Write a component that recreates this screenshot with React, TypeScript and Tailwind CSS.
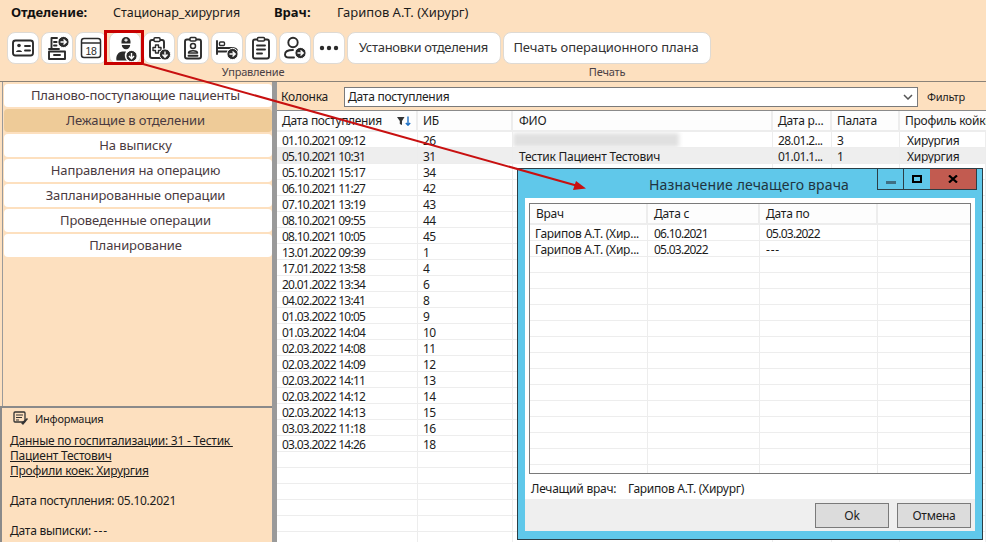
const dates = ["01.10.2021 09:12","05.10.2021 10:31","05.10.2021 15:17","06.10.2021 11:27","07.10.2021 13:19","08.10.2021 09:55","08.10.2021 10:05","13.01.2022 09:39","17.01.2022 13:58","20.01.2022 13:34","04.02.2022 13:41","01.03.2022 10:05","01.03.2022 14:04","02.03.2022 14:08","02.03.2022 14:09","02.03.2022 14:11","02.03.2022 14:12","02.03.2022 14:13","03.03.2022 11:18","03.03.2022 14:26"];
const ibs = ["26","31","34","42","43","44","45","1","4","6","8","9","10","11","12","13","14","15","16","18"];
const nav = ["Планово-поступающие пациенты","Лежащие в отделении","На выписку","Направления на операцию","Запланированные операции","Проведенные операции","Планирование"];

const S = { fill: "none", stroke: "#2b2b2b", strokeWidth: 1.9, strokeLinecap: "round" as const, strokeLinejoin: "round" as const };
function Badge({ dir, x = 17.5, y = 17.5 }: { dir: "r" | "d"; x?: number; y?: number }) {
  return (
    <g>
      <circle cx={x} cy={y} r={5.6} fill="#2b2b2b" stroke="#fff" strokeWidth={1} />
      {dir === "r" ? (
        <path d={`M${x - 3} ${y}h5.5M${x} ${y - 2.5}l2.7 2.5l-2.7 2.5`} fill="none" stroke="#fff" strokeWidth={1.4} />
      ) : (
        <path d={`M${x} ${y - 3}v5.5M${x - 2.5} ${y}l2.5 2.7l2.5 -2.7`} fill="none" stroke="#fff" strokeWidth={1.4} />
      )}
    </g>
  );
}
const icons = [
  <g key="0"><rect x="2" y="4.500" width="20" height="15" rx="2.500" {...S} /><circle cx="8" cy="9.500" r="1.800" fill="#2b2b2b" /><path d="M5 16c0-2.500 6-2.500 6 0z" fill="#2b2b2b" /><path d="M14 10h5M14 14.500h5" {...S} /></g>,
  <g key="1"><path d="M12 2H6.500v10" {...S} /><path d="M9 6h3M9 9.500h2.500" {...S} /><path d="M4 15.500h16v7.500h-16z" {...S} /><path d="M4 13h10M9 19h6" {...S} /><Badge dir="r" x={18.500} y={6} /></g>,
  <g key="2"><rect x="2.500" y="2.500" width="19" height="19" rx="2.500" fill="none" stroke="#2b2b2b" strokeWidth={1.500} /><path d="M2.500 7h19" fill="none" stroke="#2b2b2b" strokeWidth={1.500} /><text x="12" y="18.500" textAnchor="middle" fontSize="10.500" fill="#2b2b2b" fontFamily="Liberation Sans, sans-serif">18</text></g>,
  <g key="3"><path d="M8.500 7.500V5.500a4.500 4.500 0 0 1 9 0v2z" fill="#2b2b2b" /><path d="M13 2.400v3.400M11.300 4.100h3.400" stroke="#fff" strokeWidth={1.100} /><path d="M8.800 9h8.400a4.200 4.200 0 0 1-8.400 0z" fill="#2b2b2b" /><path d="M3.500 24.500c-1-5 2-9 6-9h3.500a7 7 0 0 0 1 9z" fill="#2b2b2b" /><Badge dir="d" x={18.500} y={20} /></g>,
  <g key="4"><rect x="3" y="4" width="14" height="18" rx="2" {...S} /><rect x="7" y="1.800" width="6" height="3.600" rx="1" fill="#fff" stroke="#2b2b2b" strokeWidth={1.500} /><path d="M8.500 9h3v2.500H14v3h-2.500v2.500h-3v-2.500H6v-3h2.500z" {...S} strokeWidth={1.400} /><Badge dir="d" x={18} y={18.500} /></g>,
  <g key="5"><rect x="4" y="3.500" width="16" height="19" rx="2" {...S} /><rect x="9" y="1.500" width="6" height="3.500" rx="1" fill="#fff" stroke="#2b2b2b" strokeWidth={1.500} /><circle cx="12" cy="10" r="2.500" {...S} strokeWidth={1.500} /><path d="M7.500 17c0-3 9-3 9 0z" {...S} strokeWidth={1.500} /><path d="M7.500 19.800h9" {...S} /></g>,
  <g key="6"><path d="M2 5v13" {...S} /><rect x="4.500" y="6" width="5" height="3.500" rx="1" {...S} strokeWidth={1.400} /><path d="M2 12h14c4 0 6 .5 6 3v2M2 15.500h10" {...S} /><Badge dir="r" x={17.500} y={18} /></g>,
  <g key="7"><rect x="4" y="3.500" width="16" height="19" rx="2" {...S} /><rect x="8.500" y="1.500" width="7" height="3.500" rx="1" fill="#fff" stroke="#2b2b2b" strokeWidth={1.500} /><path d="M8 9.500h8M8 13.500h8M8 17.500h5" {...S} /></g>,
  <g key="8"><circle cx="10" cy="6.500" r="4.700" {...S} /><path d="M10 14c-5 0-8 1.500-8 4.500c0 2 1.500 3 4 3h5" {...S} /><Badge dir="r" x={17.500} y={17} /></g>,
  <g key="9"><circle cx="5" cy="12" r="2.200" fill="#2b2b2b" /><circle cx="12" cy="12" r="2.200" fill="#2b2b2b" /><circle cx="19" cy="12" r="2.200" fill="#2b2b2b" /></g>,
];

function Row({ i }: { i: number }) {
  const cell = "h-4 border-r border-b border-[#ededed] px-[5px] leading-[17px] whitespace-nowrap overflow-hidden shrink-0";
  const num = "tracking-[-0.75px]";
  const bg = i === 1 ? "bg-[#eeeeee]" : "";
  const extra: Record<number, string[]> = { 0: ["", "28.01.2...", "3", "Хирургия"], 1: ["Тестик Пациент Тестович", "01.01.1...", "1", "Хирургия"] };
  const e = extra[i] ?? ["", "", "", ""];
  return (
    <div className={`flex ${bg}`}>
      <div className={`${cell} ${num} w-[141px]`}>{dates[i] ?? ""}</div>
      <div className={`${cell} w-[95px] tracking-[-0.5px]`}>{ibs[i] ?? ""}</div>
      <div className={`${cell} w-[260px] relative pl-[6px]`}>{i === 0 && <div className="absolute left-0 top-[1px] h-[14px] w-[166px] bg-[#e0e0e0] blur-[2px]" />}{e[0]}</div>
      <div className={`${cell} w-[59px] tracking-[-0.6px]`}>{e[1]}</div>
      <div className={`${cell} w-[68px]`}>{e[2]}</div>
      <div className={`${cell} flex-1 pl-[7px]`}>{e[3]}</div>
    </div>
  );
}

function DRow({ a, b, c }: { a?: string; b?: string; c?: string }) {
  const cell = "h-4 border-r border-b border-[#ededed] px-[6px] leading-[17px] whitespace-nowrap overflow-hidden shrink-0";
  return (
    <div className="flex">
      <div className={`${cell} w-[118px] pl-[5px]`}>{a}</div>
      <div className={`${cell} w-[112px] tracking-[-0.75px]`}>{b}</div>
      <div className={`${cell} w-[118px] ${c === "---" ? "tracking-[0.8px]" : "tracking-[-0.75px]"}`}>{c}</div>
      <div className="h-4 flex-1 border-b border-[#ededed]" />
    </div>
  );
}

export default function App() {
  const hd = "border-r-2 border-[#ededed] px-[5px] leading-[19px] whitespace-nowrap overflow-hidden";
  const btn = "h-8 shrink-0 flex items-center justify-center rounded-[8px] bg-white border border-[#dedad4]";
  return (
    <div className="relative w-[986px] h-[542px] overflow-hidden bg-[#fde0bf] text-[12px] tracking-[-0.25px] text-[#1c1c1c] font-['Noto_Sans',sans-serif]">
      <div className="h-[26px] flex items-center pl-[11px] text-[12.5px] tracking-normal">
        <b className="w-[102px] text-[#111] text-[13px]">Отделение:</b>
        <span className="w-[161px]">Стационар_хирургия</span>
        <b className="w-[63px] text-[#111] text-[13px]">Врач:</b>
        <span className="text-[13px]">Гарипов А.Т. (Хирург)</span>
      </div>
      <div className="h-[56px] flex gap-[2px] pl-[7px] pt-[6px] border-b border-[#8a8278]">
        <div className="flex flex-col items-center">
          <div className="flex gap-[2px]">
            {icons.map((ic, i) => (
              <div key={i} className={`${btn} w-8`}><svg width="24" height="24" viewBox="0 0 24 24" className="overflow-visible">{ic}</svg></div>
            ))}
            <div className={`${btn} w-[154px] text-[13px] tracking-[-0.3px] text-[#333] pr-[1px]`}>Установки отделения</div>
          </div>
          <div className="text-[11px] leading-[14px] mt-[1px] text-[#4a3f45] tracking-[-0.2px] pr-[2px]">Управление</div>
        </div>
        <div className="flex flex-col items-center">
          <div className={`${btn} w-[208px] text-[13px] tracking-[-0.1px] text-[#333] pr-[2px]`}>Печать операционного плана</div>
          <div className="text-[11px] leading-[14px] mt-[1px] text-[#4a3f45] tracking-[-0.2px]">Печать</div>
        </div>
      </div>
      <div className="flex h-[460px]">
        <div className="relative w-[272px] shrink-0 flex flex-col pl-[4px]">
          <div className="absolute left-[2px] top-0 bottom-[136px] w-[1px] bg-[#9a9a9a]" />
          <div className="h-[324px] flex flex-col gap-[2px] pt-[2px] shrink-0">
            {nav.map((n, i) => (
              <div key={n} className={`h-[23px] rounded-[4px] flex items-center justify-center pr-[5px] text-[13px] tracking-[-0.1px] text-[#4a3a40] ${i === 1 ? "bg-[#eecb98]" : "bg-white"}`}>{n}</div>
            ))}
          </div>
          <div className="flex-1 -ml-[4px] border-t-2 border-l-2 border-[#8a8a8a] pl-[8px] pt-[1px] leading-[15px]">
            <div className="flex items-center gap-[6px] h-[18px] text-[11px] pl-[3px]">
              <svg width="16" height="14" viewBox="0 0 16 14"><rect x="1" y="1" width="11" height="10" rx="1" fill="none" stroke="#333" strokeWidth="1.300" /><path d="M3 4h7M3 6.500h6M3 9h3" stroke="#333" /><path d="M8 12l6-5l1 1l-5 6z" fill="#333" /></svg>
              <span>Информация</span>
            </div>
            <div className="mt-[6px] underline whitespace-pre">{"Данные по госпитализации: 31 - Тестик \nПациент Тестович\nПрофили коек: Хирургия"}</div>
            <div className="mt-[15px]">Дата поступления: 05.10.2021</div>
            <div className="mt-[15px]">Дата выписки: <span className="tracking-[0.8px]">---</span></div>
          </div>
        </div>
        <div className="w-[5px] shrink-0 bg-[#9a9a9a]" />
        <div className="flex-1 flex flex-col min-w-0">
          <div className="h-[28px] flex items-center pl-[4px] pt-[2px] shrink-0">
            <span className="w-[63px]">Колонка</span>
            <div className="w-[574px] h-[20px] bg-white border border-[#7a7a7a] flex items-center justify-between px-[3px]">
              <span>Дата поступления</span>
              <svg width="10" height="6" viewBox="0 0 10 6" className="mr-[1px]"><path d="M1 1l4 4l4-4" fill="none" stroke="#555" strokeWidth="1.500" /></svg>
            </div>
            <span className="ml-[9px] text-[11px]">Фильтр</span>
          </div>
          <div className="flex-1 bg-white border-t border-[#8a8a8a] overflow-hidden">
            <div className="flex h-[21px] border-b-2 border-[#ededed] bg-[#fdfdfd]">
              <div className={`w-[141px] ${hd} flex justify-between items-center`}>
                <span className="tracking-[-0.35px]">Дата поступления</span>
                <svg width="14" height="10" viewBox="0 0 14 10"><path d="M0 1h7.500L5 5v4L2.800 8V5z" fill="#333" /><path d="M11 0.500v8.500M8.800 7l2.200 2.200l2.200-2.200" fill="none" stroke="#1d6fc4" strokeWidth="1.400" /></svg>
              </div>
              <div className={`w-[95px] ${hd}`}>ИБ</div>
              <div className={`w-[260px] ${hd} pl-[6px]`}>ФИО</div>
              <div className={`w-[59px] ${hd}`}>Дата р...</div>
              <div className={`w-[68px] ${hd}`}>Палата</div>
              <div className="flex-1 px-[5px] leading-[19px] whitespace-nowrap overflow-hidden">Профиль койки</div>
            </div>
            {Array.from({ length: 26 }).map((_, i) => <Row i={i} key={i} />)}
          </div>
        </div>
      </div>

      <div className="absolute left-[517px] top-[168px] w-[466px] h-[372px] bg-[#60c8ea] border border-[#2c3e46] flex flex-col">
        <div className="h-[29px] relative flex items-center justify-center shrink-0 text-[14px] tracking-[0.15px] text-[#1f3440] pr-[2px] pt-[1px]">
          Назначение лечащего врача
          <div className="absolute right-[5px] top-0 flex h-[21px] border border-t-0 border-[#2c3e46]">
            <div className="w-[26px] flex items-center justify-center border-r border-[#2c3e46]"><div className="w-[10px] h-[3px] mt-[6px] bg-[#3f6f83]" /></div>
            <div className="w-[26px] flex items-center justify-center"><div className="w-[10px] h-[8px] border-2 border-black" /></div>
            <div className="w-[46px] flex items-center justify-center bg-[#c25b50]">
              <svg width="10" height="8" viewBox="0 0 10 8"><path d="M1 0.500l8 7M9 0.500l-8 7" stroke="#000" strokeWidth="2.200" /></svg>
            </div>
          </div>
        </div>
        <div className="mx-[7px] h-[333px] bg-white flex flex-col shrink-0">
          <div className="mx-[4px] mt-[5px] h-[271px] border border-[#7a7a7a] overflow-hidden shrink-0">
            <div className="flex h-[21px] border-b-2 border-[#ededed] bg-[#fdfdfd]">
              <div className="w-[118px] border-r-2 border-[#ededed] px-[6px] leading-[19px]">Врач</div>
              <div className="w-[112px] border-r-2 border-[#ededed] px-[6px] leading-[19px]">Дата с</div>
              <div className="w-[118px] border-r-2 border-[#ededed] px-[6px] leading-[19px]">Дата по</div>
            </div>
            <DRow a="Гарипов А.Т. (Хир..." b="06.10.2021" c="05.03.2022" />
            <DRow a="Гарипов А.Т. (Хир..." b="05.03.2022" c="---" />
            {Array.from({ length: 14 }).map((_, i) => <DRow key={i} />)}
          </div>
          <div className="flex items-center h-[25px] pl-[6px] pt-[4px] shrink-0">
            <span className="w-[97px]">Лечащий врач:</span>
            <span>Гарипов А.Т. (Хирург)</span>
          </div>
          <div className="flex-1 bg-[#efefef] flex justify-end items-start gap-[8px] pt-[4px] pr-[4px]">
            <div className="w-[74px] h-[25px] bg-[#dcdcdc] border border-[#7a7a7a] flex items-center justify-center">Ok</div>
            <div className="w-[74px] h-[25px] bg-[#dcdcdc] border border-[#7a7a7a] flex items-center justify-center">Отмена</div>
          </div>
        </div>
      </div>

      <div className="absolute left-[104px] top-[30px] w-[40px] h-[35px] border-[3px] border-[#c80000]" />
      <svg className="absolute left-0 top-0 pointer-events-none" width="986" height="542">
        <path d="M143 64L578 186" stroke="#c81010" strokeWidth="2" />
        <path d="M586 188.500L573 190L576 181z" fill="#c81010" />
      </svg>
    </div>
  );
}
